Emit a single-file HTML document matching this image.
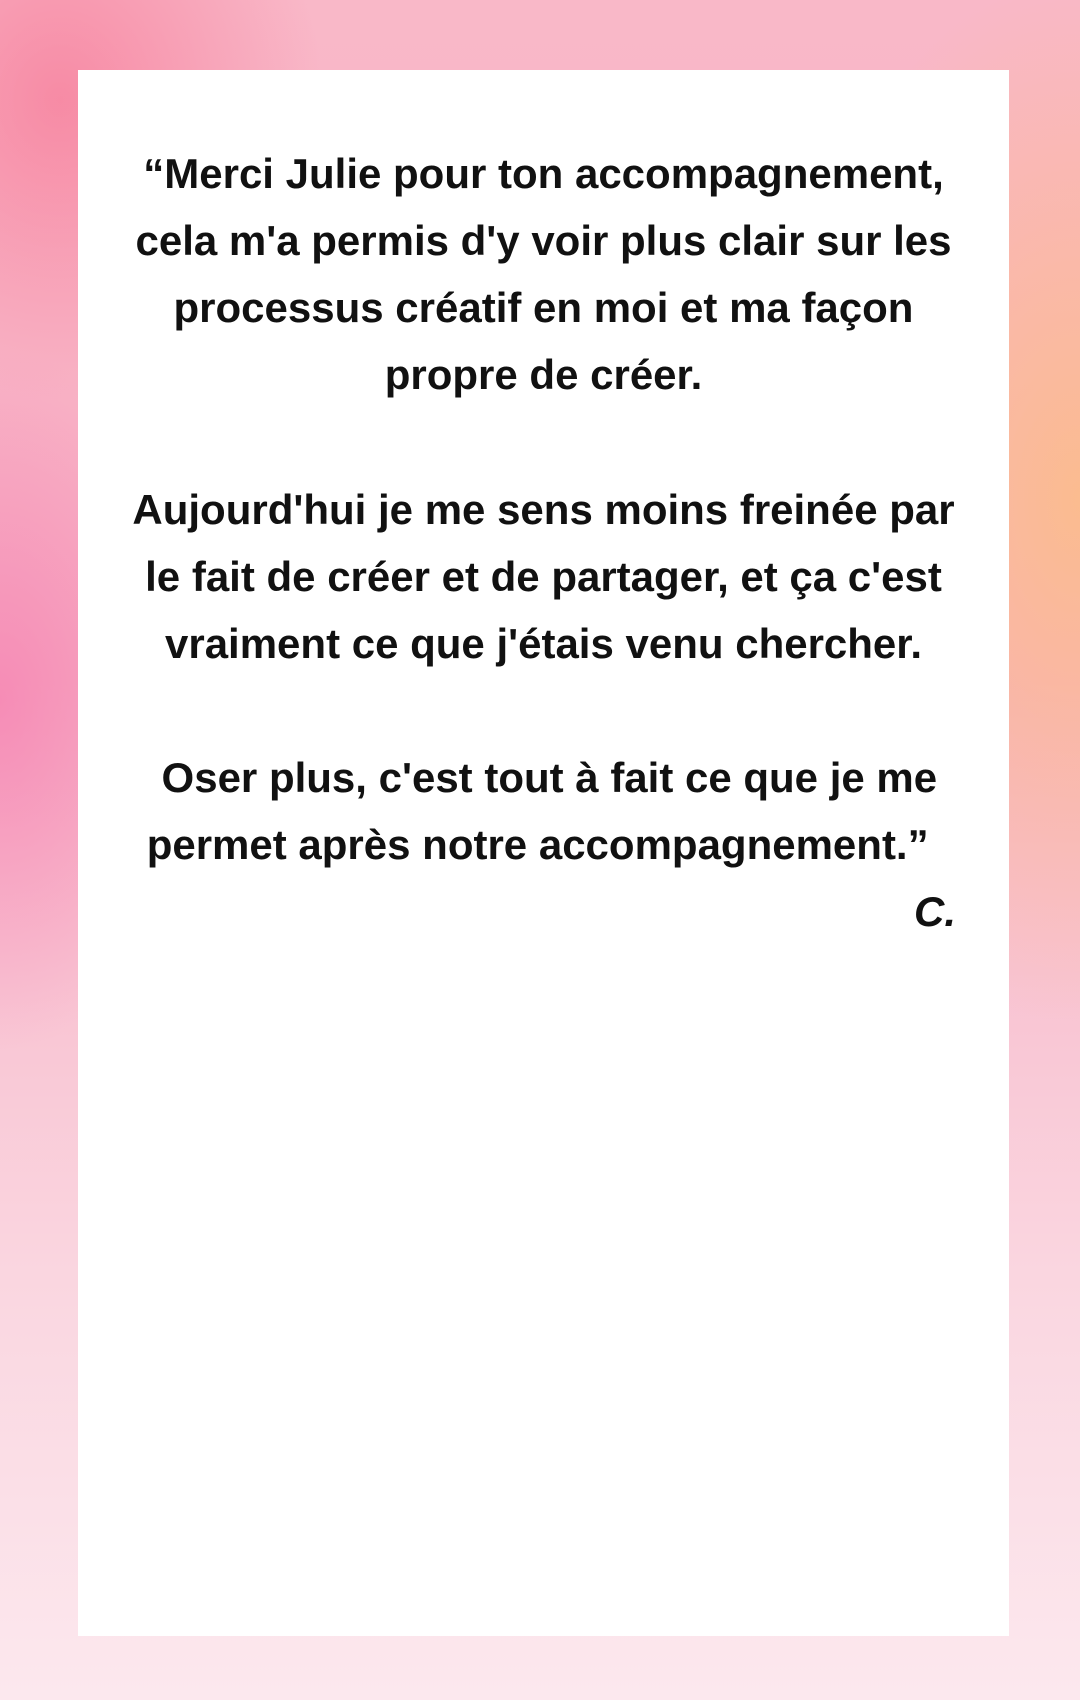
<!DOCTYPE html>
<html><head><meta charset="utf-8"><style>
html,body{margin:0;padding:0}
body{width:1080px;height:1700px;position:relative;overflow:hidden;
background:
radial-gradient(ellipse 300px 500px at 0px 700px, rgba(245,110,170,0.55), rgba(245,110,170,0) 70%),
radial-gradient(ellipse 400px 700px at 1080px 500px, rgba(252,190,130,0.8), rgba(252,190,130,0) 75%),
radial-gradient(ellipse 350px 400px at 60px 100px, rgba(246,120,150,0.7), rgba(246,120,150,0) 75%),
linear-gradient(180deg,#f9b8c8 0%,#f7b0c4 40%,#fad6e0 75%,#fce8ee 100%);}
.card{position:absolute;left:78px;top:70px;width:931px;height:1566px;background:#fff}
.t{position:absolute;left:78px;width:931px;text-align:center;font-family:"Liberation Sans",sans-serif;font-size:42px;font-weight:bold;color:#111;letter-spacing:0;line-height:67px}
</style></head><body>
<div class="card"></div>
<div class="t" style="top:140px">“Merci Julie pour ton accompagnement,<br>cela m'a permis d'y voir plus clair sur les<br>processus créatif en moi et ma façon<br>propre de créer.</div>
<div class="t" style="top:476px">Aujourd'hui je me sens moins freinée par<br>le fait de créer et de partager, et ça c'est<br>vraiment ce que j'étais venu chercher.</div>
<div class="t" style="top:744px">&nbsp;Oser plus, c'est tout à fait ce que je me<br>permet après notre accompagnement.”&nbsp;</div>
<div class="t" style="top:878px;text-align:right;width:878px;font-style:italic">C.</div>
</body></html>
